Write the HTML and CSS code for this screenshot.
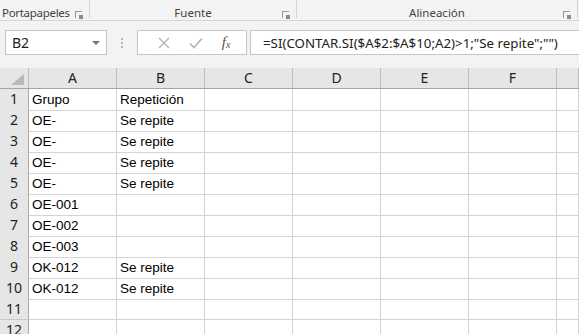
FILE: index.html
```html
<!DOCTYPE html>
<html lang="es">
<head>
    <meta charset="UTF-8">
    <meta name="viewport" content="width=device-width, initial-scale=1.0">
    <title>Libro1 - Excel</title>
    <link rel="stylesheet" href="styles.css">
</head>
<body>
    <div class="ribbon">
        <div class="group g-clip"><span>Portapapeles</span><i class="launcher"></i></div>
        <div class="group g-font"><span>Fuente</span><i class="launcher"></i></div>
        <div class="group g-align"><span>Alineación</span><i class="launcher"></i></div>
    </div>

    <div class="formula-bar">
        <div class="name-box">
            <span>B2</span>
            <i class="arrow"></i>
        </div>
        <div class="grip">
            <b></b><b></b><b></b>
        </div>
        <div class="fx-box">
            <svg width="12" height="12" viewBox="0 0 12 12"><path d="M1 1 L11 11 M11 1 L1 11" stroke="#b4b4b4" stroke-width="1.3" fill="none"/></svg>
            <svg width="14" height="12" viewBox="0 0 14 12"><path d="M1 6.5 L5 10.5 L13 1.5" stroke="#b4b4b4" stroke-width="1.6" fill="none"/></svg>
            <span class="fx">f<sub>x</sub></span>
        </div>
        <div class="formula">=SI(CONTAR.SI($A$2:$A$10;A2)&gt;1;"Se repite";"")</div>
    </div>

    <div class="sheet" id="sheet">
        <div class="hrow">
            <div class="corner"><i></i></div>
            <div class="col">A</div>
            <div class="col">B</div>
            <div class="col">C</div>
            <div class="col">D</div>
            <div class="col">E</div>
            <div class="col">F</div>
            <div class="col"></div>
        </div>
    </div>

    <script>
        // datos de la hoja
        const data = [
            ['Grupo', 'Repetición'],
            ['OE-', 'Se repite'],
            ['OE-', 'Se repite'],
            ['OE-', 'Se repite'],
            ['OE-', 'Se repite'],
            ['OE-001', ''],
            ['OE-002', ''],
            ['OE-003', ''],
            ['OK-012', 'Se repite'],
            ['OK-012', 'Se repite'],
            ['', ''],
            ['', '']
        ];
        const sheet = document.getElementById('sheet');
        data.forEach((row, i) => {
            const r = document.createElement('div');
            r.className = 'row';
            let html = `<div class="num">${i + 1}</div>`;
            html += `<div class="cell">${row[0]}</div><div class="cell">${row[1]}</div>`;
            for (let c = 0; c < 5; c++) html += '<div class="cell"></div>';
            r.innerHTML = html;
            sheet.appendChild(r);
        });
    </script>
</body>
</html>
```

FILE: styles.css
```css
body {
    margin: 0;
    padding: 0;
    width: 579px;
    height: 334px;
    overflow: hidden;
    background: #fff;
    font-family: "Noto Sans", "Liberation Sans", sans-serif;
    color: #222;
}

/* ribbon */
.ribbon {
    display: flex;
    height: 21px;
    background: #f3f3f3;
    border-bottom: 1px solid #d6d6d6;
    box-sizing: border-box;
    font-size: 11.5px;
    color: #444;
}
.group {
    position: relative;
    display: flex;
    align-items: flex-start;
    padding-top: 6px;
    line-height: 14px;
    border-right: 1px solid #d6d6d6;
    margin-bottom: 2px;
    box-sizing: border-box;
}
.g-clip {
    width: 90px;
    padding-left: 2px;
    letter-spacing: -0.3px;
}
.g-font {
    width: 207px;
    justify-content: center;
}
.g-align {
    width: 281px;
    justify-content: center;
}
.launcher {
    position: absolute;
    right: 7px;
    top: 11px;
    width: 6px;
    height: 6px;
    border: 1px solid #9a9a9a;
    border-width: 1px 0 0 1px;
}
.launcher::after {
    content: "";
    position: absolute;
    right: -1px;
    bottom: -1px;
    width: 4px;
    height: 4px;
    background: #8a8a8a;
}
.g-clip .launcher {
    right: 7px;
}

/* formula bar */
.formula-bar {
    display: flex;
    align-items: center;
    height: 47px;
    padding: 0 0 4px 5px;
    box-sizing: border-box;
    background: #f3f3f3;
}
.name-box {
    display: flex;
    align-items: center;
    justify-content: space-between;
    width: 102px;
    height: 25px;
    padding: 0 6px 0 6px;
    box-sizing: border-box;
    background: #fff;
    border: 1px solid #c6c6c6;
    font-size: 14px;
}
.arrow {
    width: 0;
    height: 0;
    border-left: 4px solid transparent;
    border-right: 4px solid transparent;
    border-top: 4px solid #777;
}
.grip {
    display: flex;
    flex-direction: column;
    gap: 2px;
    width: 30px;
    align-items: center;
}
.grip b {
    width: 2px;
    height: 2px;
    background: #b5b5b5;
}
.fx-box {
    display: flex;
    align-items: center;
    justify-content: space-around;
    width: 110px;
    height: 25px;
    padding: 0 6px 0 10px;
    box-sizing: border-box;
    background: #fff;
    border: 1px solid #c6c6c6;
}
.fx {
    font-family: "Liberation Serif", serif;
    font-style: italic;
    font-size: 15px;
    color: #555;
}
.fx sub {
    font-size: 10px;
    vertical-align: -1px;
}
.formula {
    flex: 1;
    height: 25px;
    margin-left: 3px;
    padding-left: 12px;
    line-height: 24px;
    box-sizing: border-box;
    background: #fff;
    border: 1px solid #c6c6c6;
    border-right: 0;
    font-size: 13.3px;
    white-space: nowrap;
}

/* hoja */
.sheet {
    background: #fff;
}
.hrow {
    display: grid;
    grid-template-columns: 29px repeat(6, 88px) 1fr;
    height: 21px;
    background: #e6e6e6;
    border-bottom: 1px solid #a5a5a5;
    box-sizing: border-box;
}
.col {
    border-right: 1px solid #bdbdbd;
    text-align: center;
    font-size: 14px;
    line-height: 20px;
    color: #222;
}
.corner {
    position: relative;
    border-right: 1px solid #bdbdbd;
}
.corner i {
    position: absolute;
    right: 4px;
    bottom: 3px;
    width: 0;
    height: 0;
    border-left: 13px solid transparent;
    border-bottom: 11px solid #b9b9b9;
}
.row {
    display: grid;
    grid-template-columns: 29px repeat(6, 88px) 1fr;
    height: 21px;
}
.num {
    background: #e6e6e6;
    border-right: 1px solid #ababab;
    border-bottom: 1px solid #c9c9c9;
    text-align: center;
    font-size: 14px;
    line-height: 20px;
}
.cell {
    border-right: 1px solid #d4d4d4;
    border-bottom: 1px solid #d4d4d4;
    padding-left: 3px;
    font-family: "Liberation Sans", Arial, sans-serif;
    font-size: 13.5px;
    line-height: 21px;
    color: #000;
    white-space: nowrap;
}
```
